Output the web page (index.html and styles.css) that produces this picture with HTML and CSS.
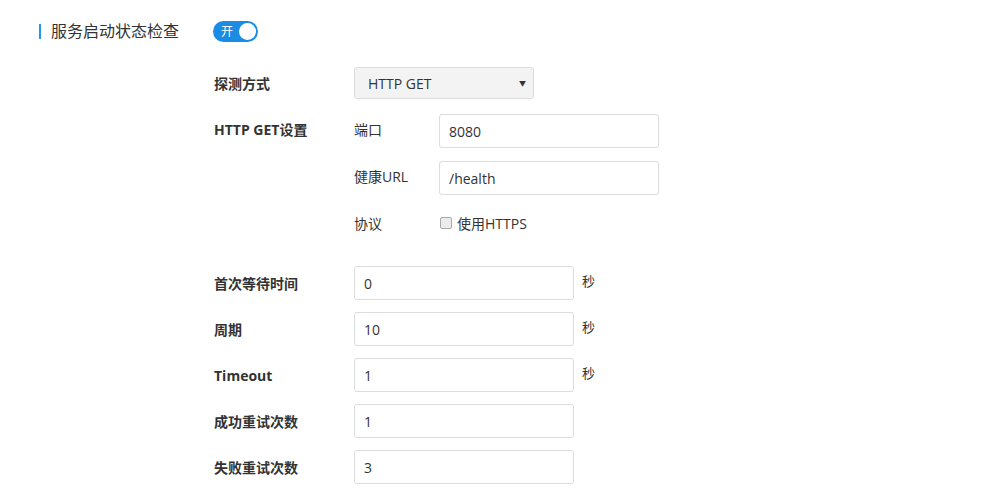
FILE: index.html
```html
<!DOCTYPE html>
<html lang="zh-CN">
<head>
    <meta charset="UTF-8">
    <title>服务启动状态检查</title>
    <link rel="stylesheet" href="styles.css">
</head>
<body>
    <div class="panel">
        <!-- section header with switch -->
        <div class="section-head">
            <span class="section-title">服务启动状态检查</span>
            <span class="switch on"><span class="switch-text">开</span><span class="switch-knob"></span></span>
        </div>

        <div class="form">
            <div class="row">
                <label class="label">探测方式</label>
                <div class="select">
                    <span>HTTP GET</span>
                    <span class="caret">▼</span>
                </div>
            </div>

            <div class="row row-top group">
                <label class="label label-top">HTTP GET设置</label>
                <div class="sub-form">
                    <div class="sub-row">
                        <span class="sub-label">端口</span>
                        <input class="input" type="text" value="8080">
                    </div>
                    <div class="sub-row">
                        <span class="sub-label">健康URL</span>
                        <input class="input" type="text" value="/health">
                    </div>
                    <div class="sub-row">
                        <span class="sub-label">协议</span>
                        <label class="check"><span class="check-box"></span>使用HTTPS</label>
                    </div>
                </div>
            </div>

            <div class="row">
                <label class="label">首次等待时间</label>
                <input class="input" type="text" value="0">
                <span class="unit">秒</span>
            </div>
            <div class="row">
                <label class="label">周期</label>
                <input class="input" type="text" value="10">
                <span class="unit">秒</span>
            </div>
            <div class="row">
                <label class="label">Timeout</label>
                <input class="input" type="text" value="1">
                <span class="unit">秒</span>
            </div>
            <div class="row">
                <label class="label">成功重试次数</label>
                <input class="input" type="text" value="1">
            </div>
            <div class="row">
                <label class="label">失败重试次数</label>
                <input class="input" type="text" value="3">
            </div>
        </div>
    </div>
</body>
</html>
```

FILE: styles.css
```css
body {
    margin: 0;
    padding: 0;
    background: #fff;
    color: #333;
    font-family: "Open Sans", "Noto Sans CJK SC", sans-serif;
    font-size: 14px;
}

.panel {
    padding: 20px 0 0 39px;
}

/* Section header */
.section-head {
    display: flex;
    align-items: center;
    height: 22px;
}

.section-title {
    width: 162px;
    padding-left: 10px;
    border-left: 2px solid #2196f3;
    font-size: 16px;
    line-height: 15px;
    color: #333;
}

.switch {
    display: flex;
    align-items: center;
    justify-content: space-between;
    width: 45px;
    height: 21px;
    box-sizing: border-box;
    padding: 0 2px 0 8px;
    border-radius: 11px;
    background: #1b8ce4;
    color: #fff;
    font-size: 12px;
}

.switch-knob {
    width: 17px;
    height: 17px;
    border-radius: 50%;
    background: #fff;
}

/* Form */
.form {
    margin: 25px 0 0 175px;
    display: flex;
    flex-direction: column;
    gap: 12px;
}

.row {
    display: flex;
    align-items: center;
}

.row-top {
    align-items: flex-start;
    margin: 3px 0 12px;
}

.label {
    width: 140px;
    flex-shrink: 0;
    font-weight: bold;
    color: #333;
}

.label-top {
    line-height: 32px;
}

.select {
    display: flex;
    align-items: center;
    justify-content: space-between;
    width: 180px;
    height: 32px;
    box-sizing: border-box;
    padding: 0 7px 0 13px;
    background: #f3f3f3;
    border: 1px solid #dcdcdc;
    border-radius: 3px;
    font-size: 14px;
}

.caret {
    font-size: 7px;
    color: #333;
}

.input {
    width: 220px;
    height: 34px;
    box-sizing: border-box;
    padding: 0 9px;
    margin: 0;
    border: 1px solid #dcdcdc;
    border-radius: 3px;
    font-family: "Open Sans", "Noto Sans CJK SC", sans-serif;
    font-size: 14px;
    color: #333;
    background: #fff;
}

.unit {
    margin-left: 8px;
    margin-top: -6px;
    font-size: 13px;
}

.sub-form {
    display: flex;
    flex-direction: column;
    gap: 13px;
}

.sub-row {
    display: flex;
    align-items: center;
    height: 34px;
}

.sub-row .sub-label {
    width: 85px;
    margin-top: -4px;
}

.check {
    display: flex;
    align-items: center;
    margin-left: 1px;
    margin-top: -4px;
}

.check-box {
    width: 12px;
    height: 12px;
    box-sizing: border-box;
    margin-right: 5px;
    border: 1px solid #a9a9a9;
    border-radius: 2px;
    background: #ececec;
}
```
